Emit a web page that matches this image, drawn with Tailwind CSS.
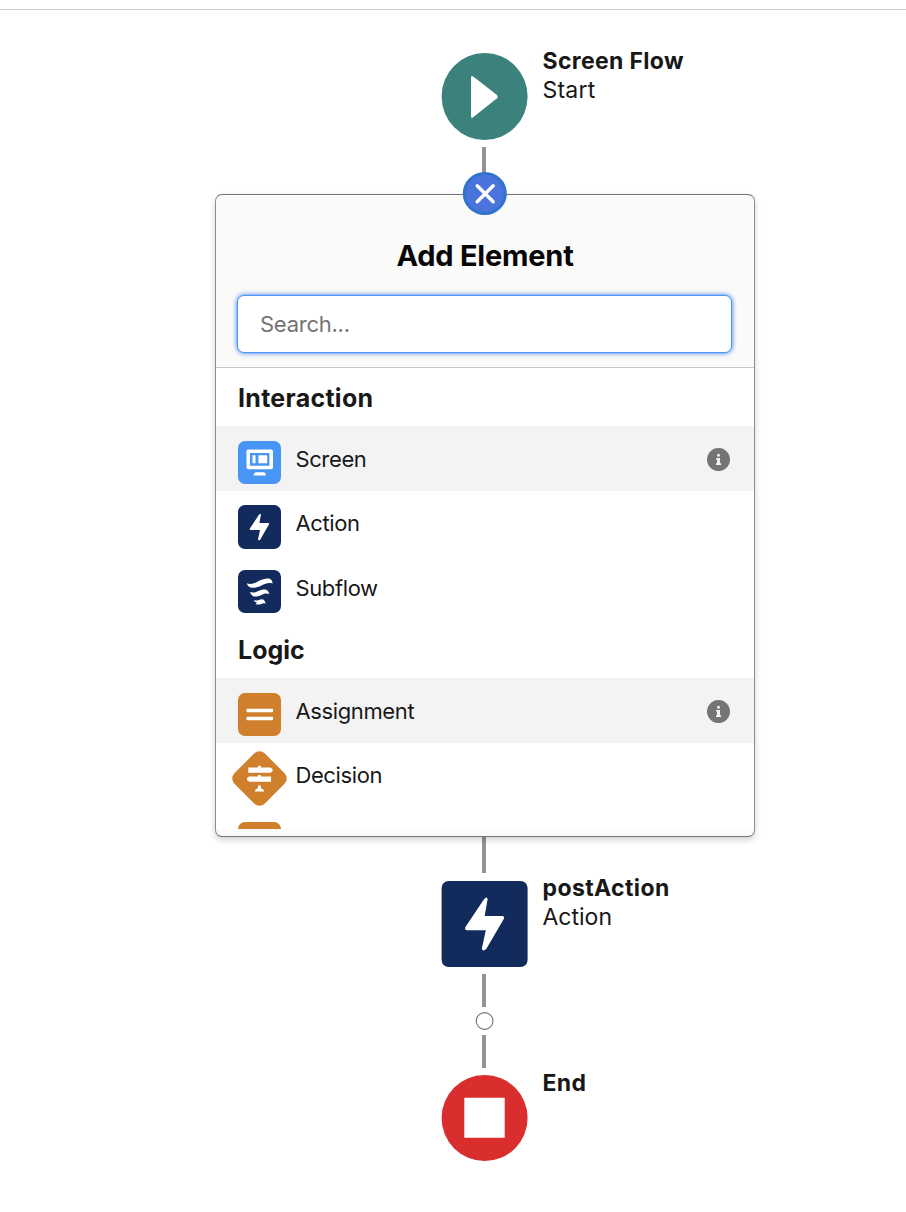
<!DOCTYPE html>
<html lang="en">
<head>
<meta charset="utf-8">
<title>Screen Flow</title>
<script src="https://cdn.jsdelivr.net/npm/@tailwindcss/browser@4"></script>
</head>
<body class="bg-white font-['Inter',sans-serif] text-[#181818]">
<svg class="hidden">
  <symbol id="bolt" viewBox="0 0 86 86"><path fill="#fff" d="M42.2 18.2Q45.6 14.9 45.8 18.3L42.9 34.9H60.3Q63.4 35.2 61.8 38.2L44.6 67.8Q40.6 71.4 40.1 67.3L44 49.2H24.9Q22.2 48.6 23.8 45.8Z"/></symbol>
  <symbol id="info" viewBox="0 0 24 24"><circle cx="12.5" cy="12.6" r="11.5" fill="#747474"/><circle cx="12.5" cy="8.2" r="1.5" fill="#f3f3f3"/><path fill="#f3f3f3" d="M10.1 10.9H14v5.4h1.1v1.6H10v-1.6h1v-3.8h-.9z"/></symbol>
</svg>
<main class="relative h-[1212px] w-[906px] overflow-hidden">
  <div class="absolute top-[9px] h-px w-full bg-[#c9c9c9]"></div>

  <!-- connectors -->
  <div class="absolute left-[482.3px] top-[147px] h-[30px] w-[4px] bg-[#939393]"></div>
  <div class="absolute left-[482.3px] top-[830px] h-[43px] w-[4px] bg-[#939393]"></div>
  <div class="absolute left-[482.3px] top-[974px] h-[33px] w-[4px] bg-[#939393]"></div>
  <div class="absolute left-[482.3px] top-[1035px] h-[33px] w-[4px] bg-[#939393]"></div>
  <svg class="absolute left-[475px] top-[1011px] size-[20px]" viewBox="0 0 20 20"><circle cx="9.6" cy="10" r="8.4" fill="#fff" stroke="#747474" stroke-width="1.1"/></svg>

  <!-- start node -->
  <div class="absolute left-[441px] top-[53px] flex gap-[14.5px]">
    <svg class="h-[87px] w-[87px]" viewBox="0 0 87 87"><ellipse cx="43.6" cy="43.5" rx="43" ry="43.5" fill="#3a827b"/><path d="M30 24.5Q30 22.2 32.2 23.4L56 42Q57.6 43.6 56 45.2L32.2 64.2Q30 65.8 30 63.5Z" fill="#fff"/></svg>
    <div class="-mt-[6px] whitespace-nowrap text-[23px] leading-[29px]">
      <div class="font-bold tracking-[0.34px]">Screen Flow</div>
      <div class="tracking-[0.2px]">Start</div>
    </div>
  </div>

  <!-- action node -->
  <div class="absolute left-[441px] top-[881px] flex gap-[14.5px]">
    <svg class="h-[86px] w-[87px]" viewBox="0 0 87 86"><rect x="0.6" width="86" height="86" rx="7" fill="#122b5c"/><use href="#bolt" x="0.8" width="86" height="86"/></svg>
    <div class="-mt-[7px] whitespace-nowrap text-[23px] leading-[29px]">
      <div class="font-bold tracking-[0.4px]">postAction</div>
      <div>Action</div>
    </div>
  </div>

  <!-- end node -->
  <div class="absolute left-[441px] top-[1075px] flex gap-[14.5px]">
    <svg class="h-[86px] w-[87px]" viewBox="0 0 87 86"><circle cx="43.6" cy="43" r="43" fill="#d92d2e"/><path fill="#fff" d="M23.3 22.8h40.4v40H23.3z"/></svg>
    <div class="-mt-[6px] text-[23px] leading-[29px] font-bold tracking-[0.4px]">End</div>
  </div>

  <!-- element picker -->
  <section class="absolute left-[215px] top-[194px] flex h-[643px] w-[540px] flex-col overflow-hidden rounded-[7px] border border-[#747474] border-x-[#8f8f8f] bg-[#fafaf9] shadow-[0_3px_6px_rgba(0,0,0,0.18)]">
    <header class="h-[173px] shrink-0 border-b border-[#c9c9c9] px-[21px] pt-[42px]">
      <h2 class="text-center text-[29px] leading-[38px] font-bold tracking-[-0.22px] text-[#080707]">Add Element</h2>
      <input class="mt-[20px] block h-[58px] w-[495px] rounded-[7px] border border-[#4c94f7] bg-white px-[22px] text-[22px] tracking-[-0.25px] shadow-[0_0_5px_#2b78e4] outline-none placeholder:text-[#747474]" placeholder="Search...">
    </header>
    <div class="h-[461px] shrink-0 overflow-hidden bg-white">
      <h3 class="h-[58px] pt-[14px] pl-[22px] text-[25px] leading-[32px] font-bold tracking-[0.28px]">Interaction</h3>
      <div class="flex h-[65px] items-start bg-[#f3f3f3] pr-[24px] pl-[22px] pt-[15px]">
        <svg class="size-[43px] rounded-[7px] bg-[#4795f5]" viewBox="0 0 43 43"><rect x="8.5" y="8.5" width="26.5" height="19.8" rx="2" fill="#fff"/><path fill="#4795f5" d="M12 12h19.4v12.7H12z"/><path fill="#fff" d="M14.5 14.2h3v8h-3zM20.4 14.2h8.8v8h-8.8z"/><path fill="#fff" d="M17.5 31.3h8.6Q28 32 28 34.6H15.6Q15.6 32 17.5 31.3z"/></svg>
        <span class="ml-[14.4px] grow text-[22px] leading-[36px] tracking-[-0.36px]">Screen</span>
        <svg class="mt-[6px] size-[24px]"><use href="#info"/></svg>
      </div>
      <div class="flex h-[64px] items-start pl-[22px] pt-[14px]">
        <svg class="h-[44px] w-[43px] rounded-[7px] bg-[#122b5c]" viewBox="0 0 43 44"><use href="#bolt" x="0" y="0.5" width="43" height="43"/></svg>
        <span class="ml-[14.4px] text-[22px] leading-[36px] tracking-[-0.36px]">Action</span>
      </div>
      <div class="flex h-[65px] items-start pl-[22px] pt-[15px]">
        <svg class="size-[43px] rounded-[7px] bg-[#122b5c]" viewBox="0 0 43 43" fill="#fff"><path d="M8.6 13.2C11.5 14.4 15.5 14 19 12C23 9.6 27.5 8.2 31.8 8.7Q34.3 9.6 34.6 13.6C30.5 12.4 27.5 13.6 23.5 15.5C19 17.6 15.2 18.4 12.4 17.4Q9.6 16.2 8.6 13.2Z"/><path d="M12 22.1C14.8 23.1 17.6 22.4 20.2 21C24 19 28.8 18.8 30 21L31.4 24C28 22.8 26 23.6 23.4 24.9C20 26.6 16.9 27.1 14.7 26Q12.6 24.6 12 22.1Z"/><path d="M15.6 30C17.6 31 19.2 30.6 20.8 30C24.2 28.7 26.2 29.4 26.8 31.5L28 33.8C26 33 24.6 33.3 23.4 33.9C21.3 34.9 19.4 34.8 17.6 33.9L19 32.5Q16.4 32.1 15.6 30Z"/></svg>
        <span class="ml-[14.4px] text-[22px] leading-[36px] tracking-[-0.36px]">Subflow</span>
      </div>
      <h3 class="h-[58px] pt-[14px] pl-[22px] text-[25px] leading-[32px] font-bold tracking-[0px]">Logic</h3>
      <div class="flex h-[65px] items-start bg-[#f3f3f3] pr-[24px] pl-[22px] pt-[15px]">
        <svg class="size-[43px] rounded-[7px] bg-[#d0802c]" viewBox="0 0 43 43" fill="#fff"><rect x="8.5" y="15.7" width="26.5" height="3.6" rx=".7"/><rect x="8.5" y="23.7" width="26.5" height="3.6" rx=".7"/></svg>
        <span class="ml-[14.4px] grow text-[22px] leading-[36px] tracking-[-0.36px]">Assignment</span>
        <svg class="mt-[6px] size-[24px]"><use href="#info"/></svg>
      </div>
      <div class="flex h-[79px] items-start pl-[16px] pt-[8px]">
        <svg class="size-[56px]" viewBox="0 0 56 56" fill="#fff"><rect x="6" y="6" width="43" height="43" rx="7.6" transform="rotate(45 27.5 27.5)" fill="#d0802c"/><path d="M26 16.4v-1.6h2.8v1.6h9.6q2.4 1 2.4 2.6t-2.4 2.7H16.3v-5.3zM26 25.5v-1.4h2.8v1.4H39v5.2H17.2q-2.4-1-2.4-2.6t2.4-2.6zM26 34.4h2.8v2.3c.4 1.4 3.2.8 3.2 3.8h-9c0-3 2.6-2.4 3-3.8z"/></svg>
        <span class="ml-[7.4px] mt-[6px] text-[22px] leading-[36px] tracking-[-0.36px]">Decision</span>
      </div>
      <div class="pl-[22px]"><div class="size-[43px] rounded-[7px] bg-[#d0802c]"></div></div>
    </div>
  </section>

  <!-- close button -->
  <button aria-label="Close" class="absolute left-[462px] top-[172px] size-[44px]"><svg class="size-[45px]" viewBox="0 0 45 45"><ellipse cx="22.8" cy="21.5" rx="20.5" ry="20" fill="#4a74dc" stroke="#2f73cd" stroke-width="3"/><path d="M15.2 13.7l16 16M31.2 13.7l-16 16" stroke="#fff" stroke-width="3.4" stroke-linecap="round"/></svg></button>
</main>
</body>
</html>
